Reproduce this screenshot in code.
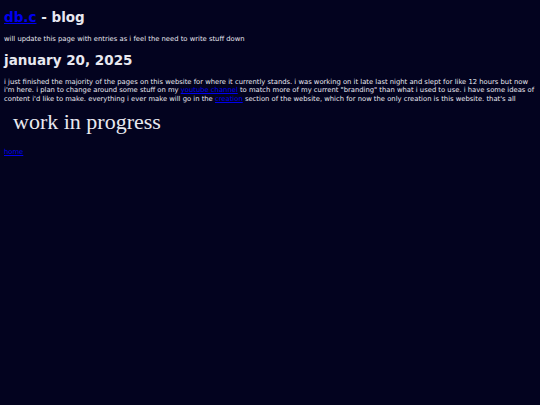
export default function App() {
  return (
    <div className="min-h-[405px] w-full bg-[#03031f] text-[#e8e8f0] px-[4px] pt-[8px]" style={{ fontFamily: '"DejaVu Sans", Verdana, sans-serif' }}>
      <h1 className="text-[13.5px] font-bold leading-[18px]">
        <a href="#" className="text-[#0000ee] underline">db.c</a> - blog
      </h1>
      <p className="text-[6.8px] leading-[9px] mt-[8.5px]">will update this page with entries as i feel the need to write stuff down</p>
      <h2 className="text-[13.5px] font-bold leading-[18px] mt-[7.5px]">january 20, 2025</h2>
      <p className="text-[6.8px] leading-[8.5px] mt-[8.5px]">
        i just finished the majority of the pages on this website for where it currently stands. i was working on it late last night and slept for like 12 hours but now i'm here. i plan to change around some stuff on my{' '}
        <a href="#" className="text-[#0000ee] underline">youtube channel</a> to match more of my current "branding" than what i used to use. i have some ideas of content i'd like to make. everything i ever make will go in the{' '}
        <a href="#" className="text-[#0000ee] underline">creation</a> section of the website, which for now the only creation is this website. that's all
      </p>
      <p className="text-[22px] leading-[24px] mt-[7px] pl-[9px]" style={{ fontFamily: '"Liberation Serif", "Times New Roman", serif' }}>work in progress</p>
      <p className="text-[6.8px] leading-[9px] mt-[13.5px]">
        <a href="#" className="text-[#0000ee] underline">home</a>
      </p>
    </div>
  );
}
